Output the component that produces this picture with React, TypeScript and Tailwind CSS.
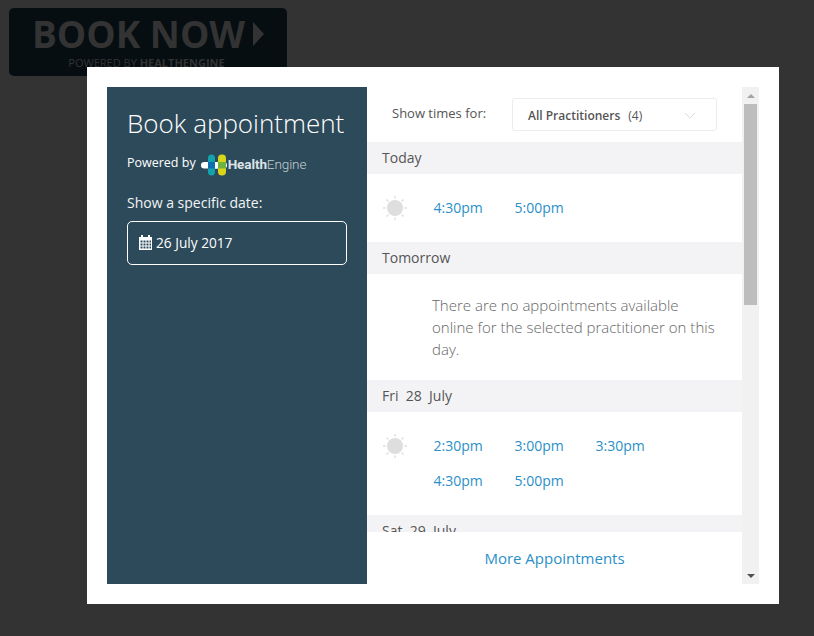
import React from "react";

const openSans = "font-['Open_Sans',sans-serif]";

function Sun() {
  const rays = [0, 45, 90, 135, 180, 225, 270, 315];
  return (
    <svg width="26" height="26" viewBox="0 0 26 26" className="shrink-0">
      <circle cx="13" cy="13" r="8" fill="#dedede" />
      {rays.map((r) => (
        <line key={r} x1="13" y1="1" x2="13" y2="3.6" stroke="#e2e2e2" strokeWidth="1.6" transform={`rotate(${r} 13 13)`} />
      ))}
    </svg>
  );
}

function Logo() {
  return (
    <div className="flex items-center ml-[5px]">
      <svg width="27" height="22" viewBox="0 0 27 22">
        <rect x="0" y="8" width="26" height="6.5" rx="3.2" fill="#ffffff" />
        <rect x="7" y="0.5" width="7" height="21" rx="3.5" fill="#12a3ac" />
        <rect x="17" y="0.5" width="8" height="21" rx="3.7" fill="#d9d51a" />
        <rect x="7" y="8" width="7" height="6.5" fill="#0f6fae" />
        <rect x="14" y="8" width="3" height="6.5" fill="#ffffff" />
        <rect x="17" y="8" width="8" height="6.5" fill="#6fb43f" />
      </svg>
      <span className="text-[13.5px] leading-none font-['Roboto',sans-serif] tracking-[-0.1px]">
        <span className="font-bold text-[#dde3e6]">Health</span>
        <span className="font-light text-[#c5d0d5]">Engine</span>
      </span>
    </div>
  );
}

function DayHeader({ label }: { label: string }) {
  return (
    <div className="h-8 shrink-0 bg-[#f3f3f5] pl-[15px] text-[14px] leading-8 text-[#555] whitespace-pre">{label}</div>
  );
}

function Times({ rows }: { rows: string[][] }) {
  return (
    <div className="flex gap-[25px] pl-[15px]">
      <div className="-mt-[3px]">
        <Sun />
      </div>
      <div className="flex flex-col gap-[15px] pl-[0.5px]">
        {rows.map((row, i) => (
          <div key={i} className="flex gap-[32px]">
            {row.map((t) => (
              <a key={t} className="w-[49px] text-[14px] leading-5 text-[#2a8fc7]">{t}</a>
            ))}
          </div>
        ))}
      </div>
    </div>
  );
}

export default function App() {
  return (
    <div className={`${openSans} relative h-[636px] w-[814px] overflow-hidden bg-[#333333] pl-[9px] pt-2`}>
      {/* dimmed button behind the modal */}
      <div className="flex h-[68px] w-[278px] flex-col items-center rounded-[5px] bg-[#060e12]">
        <div className="flex items-center pt-[5px]">
          <span className="text-[37px] font-bold leading-[42px] text-[#333]">BOOK NOW</span>
          <svg width="11" height="24" viewBox="0 0 11 24" className="ml-[8px]">
            <path d="M0 0 L11 12 L0 24 Z" fill="#333" />
          </svg>
        </div>
        <div className="text-[11px] leading-4 text-[#333] pr-[3px]">
          POWERED BY <span className="font-bold">HEALTHENGINE</span>
        </div>
      </div>

      <div className="absolute left-[87px] top-[67px] h-[537px] w-[692px] bg-white p-5">
        <div className="flex h-[497px]">
          {/* left panel */}
          <div className="w-[260px] shrink-0 bg-[#2d4a5a] px-5 text-white">
            <h1 className="pt-[18px] text-[26px] font-light leading-9">Book appointment</h1>
            <div className="mt-[13px] flex h-[22px] items-center text-[12.5px]">
              <span className="-mt-[3px]">Powered by</span>
              <Logo />
            </div>
            <div className="mt-[17px] text-[14px] leading-5 text-[#f2f5f6]">Show a specific date:</div>
            <div className="mt-[8px] flex h-11 w-[220px] items-center rounded-[5px] border border-white pl-[10px] text-[13.7px]">
              <svg width="15" height="15" viewBox="0 0 15 15" className="mr-[3px] -mt-[2px]">
                <path
                  fill="#fff"
                  fillRule="evenodd"
                  d="M3 0h2v2h5V0h2v2h2v13H1V2h2V0zM2.5 5.5v2h2v-2h-2zm3 0v2h2v-2h-2zm3 0v2h2v-2h-2zm3 0v2h1.5v-2h-1.5zm-9 3v2h2v-2h-2zm3 0v2h2v-2h-2zm3 0v2h2v-2h-2zm3 0v2h1.5v-2h-1.5zm-9 3v2h2v-2h-2zm3 0v2h2v-2h-2zm3 0v2h2v-2h-2zm3 0v2h1.5v-2h-1.5z"
                />
              </svg>
              26 July 2017
            </div>
          </div>

          {/* right panel */}
          <div className="flex w-[375px] shrink-0 flex-col">
            <div className="flex h-[55px] shrink-0 items-start pl-[25px] pt-[11px]">
              <span className="w-[95px] pt-[6px] text-[13px] leading-[18px] text-[#555] whitespace-nowrap">Show times for:</span>
              <div className="ml-[25px] flex h-[33px] w-[205px] items-center rounded-[3px] border border-[#ececec] pl-[15px] pt-[2px] text-[12px] text-[#555]">
                <span className="font-semibold">All Practitioners</span>
                <span className="ml-2">(4)</span>
                <svg width="12" height="7" viewBox="0 0 12 7" className="ml-auto mr-[20px]">
                  <path d="M1 1 L6 6 L11 1" fill="none" stroke="#ddd" strokeWidth="1" />
                </svg>
              </div>
            </div>

            <div className="h-[390px] shrink-0 overflow-hidden">
              <DayHeader label="Today" />
              <div className="h-[68px] pt-6">
                <Times rows={[["4:30pm", "5:00pm"]]} />
              </div>
              <DayHeader label="Tomorrow" />
              <div className="h-[106px] pl-[65px] pr-[25px] pt-5 text-[15px] font-light leading-[22px] text-[#666]">
                There are no appointments available online for the selected practitioner on this day.
              </div>
              <DayHeader label="Fri  28  July" />
              <div className="h-[103px] pt-6">
                <Times rows={[["2:30pm", "3:00pm", "3:30pm"], ["4:30pm", "5:00pm"]]} />
              </div>
              <DayHeader label="Sat  29  July" />
            </div>

            <div className="h-[52px] shrink-0 pt-4 text-center text-[15px] leading-5 text-[#2a8fc7]">More Appointments</div>
          </div>

          {/* scrollbar */}
          <div className="flex w-[17px] shrink-0 flex-col items-center bg-[#f1f1f1]">
            <div className="flex h-[17px] w-full items-center justify-center">
              <div className="h-0 w-0 border-x-[4px] border-b-[4px] border-x-transparent border-b-[#a3a3a3]" />
            </div>
            <div className="h-[201px] w-[13px] bg-[#bdbdbd]" />
            <div className="flex-1" />
            <div className="flex h-[17px] w-full items-center justify-center">
              <div className="h-0 w-0 border-x-[4px] border-t-[4px] border-x-transparent border-t-[#505050]" />
            </div>
          </div>
        </div>
      </div>
    </div>
  );
}
